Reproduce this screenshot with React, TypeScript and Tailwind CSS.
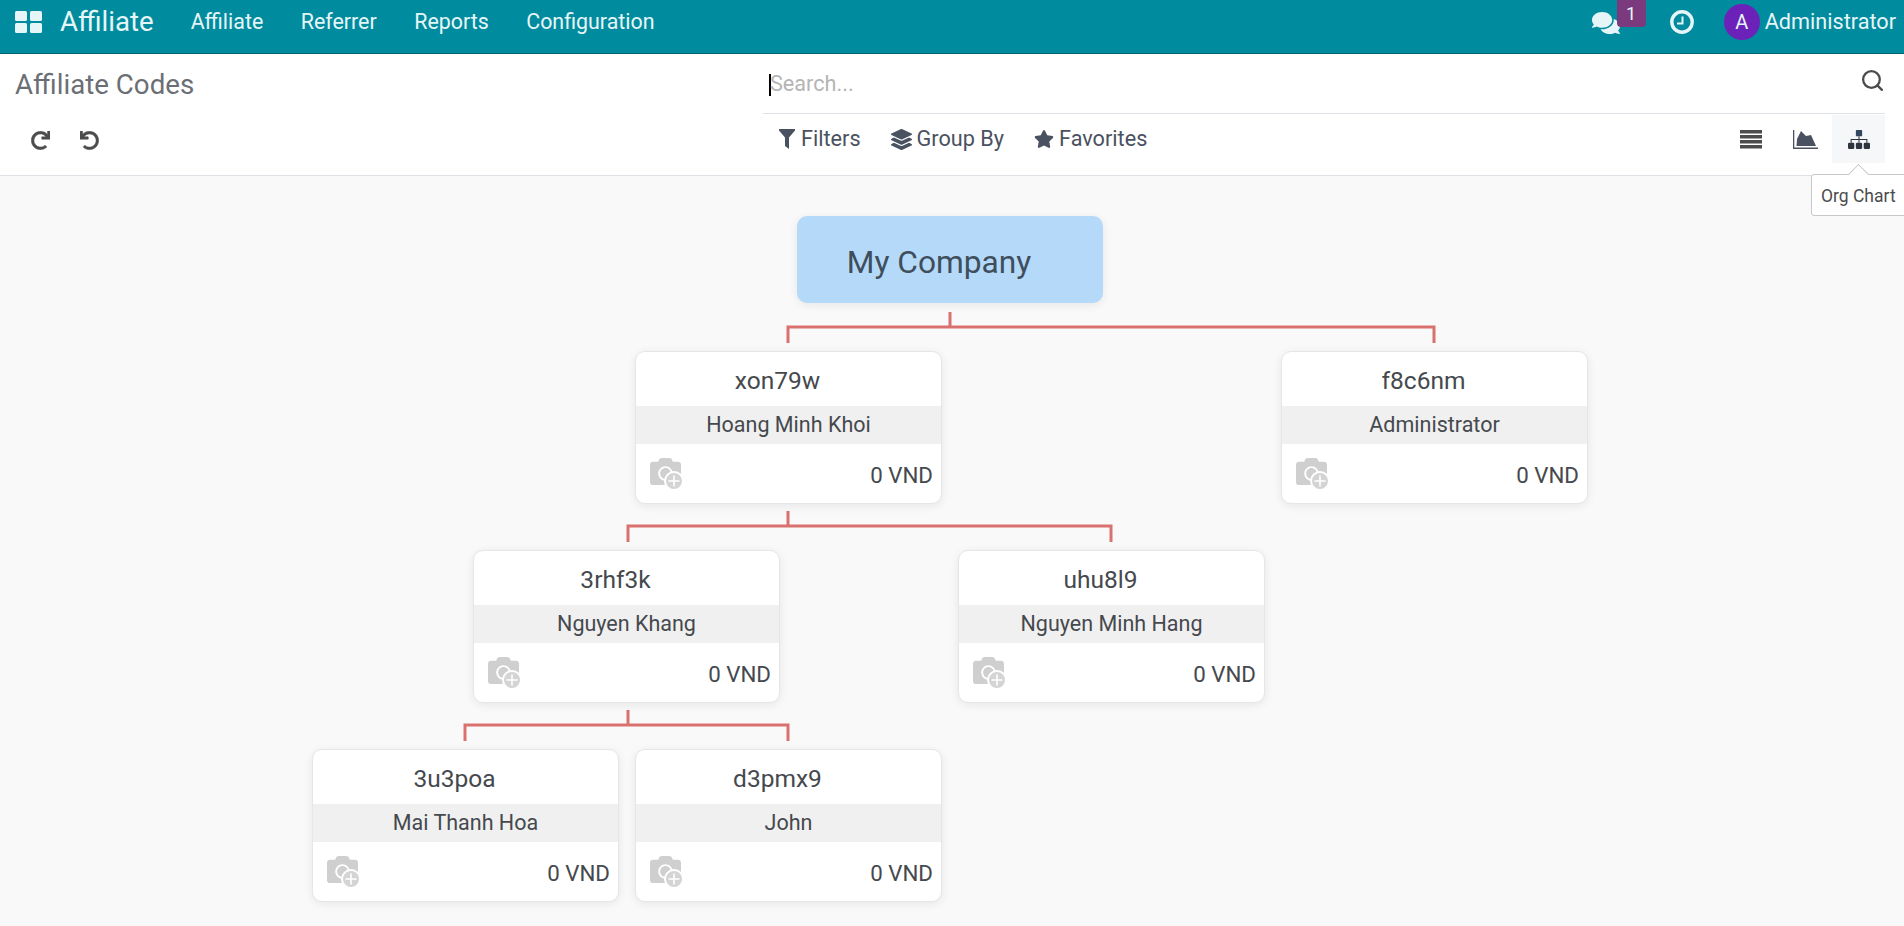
import { FaComments, FaLayerGroup, FaStar, FaRedo, FaUndo, FaCamera } from "react-icons/fa";
import { Search } from "lucide-react";

const font = { fontFamily: "Roboto, sans-serif" };

const nodes = [
    { code: "xon79w", name: "Hoang Minh Khoi", x: 635, y: 175 },
    { code: "f8c6nm", name: "Administrator", x: 1281, y: 175 },
    { code: "3rhf3k", name: "Nguyen Khang", x: 473, y: 374 },
    { code: "uhu8l9", name: "Nguyen Minh Hang", x: 958, y: 374 },
    { code: "3u3poa", name: "Mai Thanh Hoa", x: 312, y: 573 },
    { code: "d3pmx9", name: "John", x: 635, y: 573 },
];

// stem x, stem top, bar left, bar right (chart coordinates)
const links = [
    { x: 950, y: 136, l: 788, r: 1434 },
    { x: 788, y: 335, l: 628, r: 1111 },
    { x: 628, y: 534, l: 465, r: 788 },
];

function AppsIcon() {
    return (
        <svg width="27" height="22" viewBox="0 0 27 22" fill="#e6f6f8">
            <rect x="0" y="0" width="12" height="10" rx="1.5" />
            <rect x="15" y="0" width="12" height="10" rx="1.5" />
            <rect x="0" y="12" width="12" height="10" rx="1.5" />
            <rect x="15" y="12" width="12" height="10" rx="1.5" />
        </svg>
    );
}

function ClockIcon() {
    return (
        <svg width="24" height="24" viewBox="0 0 24 24" fill="none" stroke="#e6f6f8">
            <circle cx="12" cy="12" r="10.2" strokeWidth="3.4" />
            <path d="M12.5 6.5V13.5H7" strokeWidth="2" />
        </svg>
    );
}

function FilterIcon() {
    return (
        <svg width="16" height="20" viewBox="0 0 16 20" fill="currentColor">
            <path d="M0 0H16V1.5L10 8.5V20L6 17V8.5L0 1.5Z" />
        </svg>
    );
}

function ListIcon() {
    return (
        <svg width="22" height="19" viewBox="0 0 22 19" fill="#4c4c4c">
            <rect y="0" width="22" height="3.5" />
            <rect y="5" width="22" height="3.5" />
            <rect y="10" width="22" height="3.5" />
            <rect y="15" width="22" height="3.5" />
        </svg>
    );
}

function AreaIcon() {
    return (
        <svg width="25" height="19" viewBox="0 0 25 19" fill="#4a5160">
            <path d="M0 0H1.3V17.6H25V19H0Z" />
            <path d="M3.5 16L4 9L8 1L13 6L18 5L23 16Z" />
        </svg>
    );
}

function SitemapIcon() {
    return (
        <svg width="22" height="19" viewBox="0 0 21 18" fill="#2f3540">
            <rect x="7.5" y="0" width="6" height="6" rx="0.8" fill="#33475e" />
            <path d="M10 6H11V8.5H18.5V12H17.5V9.5H11V12H10V9.5H3.5V12H2.5V8.5H10Z" />
            <rect x="0" y="12" width="6" height="6" rx="1.2" />
            <rect x="7.5" y="12" width="6" height="6" rx="1.2" />
            <rect x="15" y="12" width="6" height="6" rx="1.2" />
        </svg>
    );
}

function PlusBadge() {
    return (
        <svg className="absolute -right-[3px] -bottom-[4px]" width="20" height="20" viewBox="0 0 20 20">
            <circle cx="10" cy="10" r="9" fill="#d4d4d4" stroke="#ffffff" strokeWidth="2" />
            <path d="M10 4.5V15.5M4.5 10H15.5" stroke="#ffffff" strokeWidth="1.6" />
        </svg>
    );
}

function NodeCard({ code, name, x, y }: { code: string; name: string; x: number; y: number }) {
    return (
        <div
            className="absolute w-[307px] h-[153px] bg-white rounded-[10px] shadow-[0_2px_10px_rgba(0,0,0,0.08)] border border-[#e6e6e6] overflow-hidden text-[#45494e]"
            style={{ left: x, top: y }}
        >
            <div className="h-[54px] flex items-center justify-center pt-[4px] pr-[22px] text-[24.5px]">{code}</div>
            <div className="h-[38px] flex items-center justify-center bg-[#f0f0f0] text-[21.5px]">{name}</div>
            <div className="h-[59px] flex items-center justify-between pl-[14px] pr-2">
                <div className="relative text-[#cfcfcf] -mt-1">
                    <FaCamera size={31} />
                    <PlusBadge />
                </div>
                <span className="text-[22.3px] mt-[5px]">0 VND</span>
            </div>
        </div>
    );
}

export default function App() {
    return (
        <div className="h-screen overflow-hidden flex flex-col bg-[#f9f9f9]" style={font}>
            {/* Top bar */}
            <div className="h-[54px] shrink-0 bg-[#018b9e] border-b border-[#01606d] flex items-center pb-[9px] text-[#e6f6f8] text-[21.67px]">
                <div className="ml-[15px] w-[27px] flex"><AppsIcon /></div>
                <span className="ml-[18px] text-[27.6px]">Affiliate</span>
                <div className="ml-[37px] flex gap-[37.5px] text-[21.4px]">
                    <span>Affiliate</span>
                    <span>Referrer</span>
                    <span>Reports</span>
                    <span>Configuration</span>
                </div>
                <div className="ml-auto flex items-center pr-[8px]">
                    <div className="relative w-[78px] h-[24px] flex">
                        <FaComments size={28} className="-mt-[1px]" />
                        <div className="absolute left-[25px] -top-[10px] w-[29px] h-[27px] rounded-b bg-[#7c3a7e] text-[18px] flex items-center justify-center">1</div>
                    </div>
                    <ClockIcon />
                    <div className="ml-[30px] w-9 h-9 rounded-full bg-[#6c22b8] flex items-center justify-center text-[20px]">A</div>
                    <span className="ml-[5px]">Administrator</span>
                </div>
            </div>

            {/* Control panel */}
            <div className="h-[122px] shrink-0 bg-white border-b border-[#dee2e6] flex text-[#4c4c4c]">
                <div className="w-[763px] shrink-0 flex flex-col">
                    <div className="h-[61px] flex items-center pl-[15px] text-[27.7px] text-[#6b6f75]">Affiliate Codes</div>
                    <div className="flex-1 flex items-center pl-[31px] gap-[30px] pb-[10px]">
                        <FaRedo size={19} stroke="currentColor" strokeWidth={12} />
                        <FaUndo size={19} stroke="currentColor" strokeWidth={12} />
                    </div>
                </div>
                <div className="w-[1122px] shrink-0 flex flex-col">
                    <div className="h-[60px] border-b border-[#dee2e6] flex items-center justify-between text-[21.67px]">
                        <div className="flex items-center pl-[6px] pt-[2px] text-[#b5b5b5]">
                            <span className="w-[2px] h-[22px] bg-black" />
                            <span className="-ml-[1px]">Search...</span>
                        </div>
                        <Search size={25} strokeWidth={2.2} className="-mt-[6px]" />
                    </div>
                    <div className="flex-1 flex justify-between text-[21.67px] text-[#4a5160]">
                        <div className="flex items-center pl-[16px] pb-[11px]">
                            <FilterIcon />
                            <span className="ml-[6px]">Filters</span>
                            <FaLayerGroup size={21} className="ml-[30px]" />
                            <span className="ml-[5px]">Group By</span>
                            <FaStar size={20} className="ml-[30px]" />
                            <span className="ml-[5px]">Favorites</span>
                        </div>
                        <div className="flex items-start text-[#4c4c4c] mt-[1px]">
                            <div className="h-[48px] w-[53px] pr-[3px] flex items-center justify-center"><ListIcon /></div>
                            <div className="h-[48px] w-[53px] pr-[1px] flex items-center justify-center"><AreaIcon /></div>
                            <div className="h-[48px] w-[53px] bg-[#f6f7f8] flex items-center justify-center"><SitemapIcon /></div>
                        </div>
                    </div>
                </div>
            </div>

            {/* Org chart */}
            <div className="relative flex-1 text-[#45494e]">
                <div className="absolute left-[1811px] top-[-2px] w-[100px] h-[42px] z-10 bg-white border border-[#c8c8c8] rounded-[3px] flex items-center pl-[9px] pt-[2px] text-[17.5px] text-[#4c4c4c]">Org Chart</div>
                <div className="absolute left-[1851px] top-[-9px] w-[15px] h-[15px] z-20 rotate-45 bg-white border-l border-t border-[#c8c8c8]" />

                <div className="absolute left-[797px] top-[40px] w-[306px] h-[87px] rounded-[10px] bg-[#b5daf9] shadow-[0_2px_10px_rgba(0,0,0,0.08)] flex items-center justify-center pt-[6px] pr-[22px] text-[31.7px] text-[#3f4e5c]">
                    My Company
                </div>

                <svg className="absolute inset-0" width="1904" height="750" fill="none" stroke="#d9716f" strokeWidth="3">
                    {links.map((k) => (
                        <g key={k.x}>
                            <path d={`M${k.x} ${k.y}V${k.y + 16}`} />
                            <path d={`M${k.l} ${k.y + 31}V${k.y + 15}H${k.r}V${k.y + 31}`} />
                        </g>
                    ))}
                </svg>

                {nodes.map((n) => (
                    <NodeCard key={n.code} {...n} />
                ))}
            </div>
        </div>
    );
}
